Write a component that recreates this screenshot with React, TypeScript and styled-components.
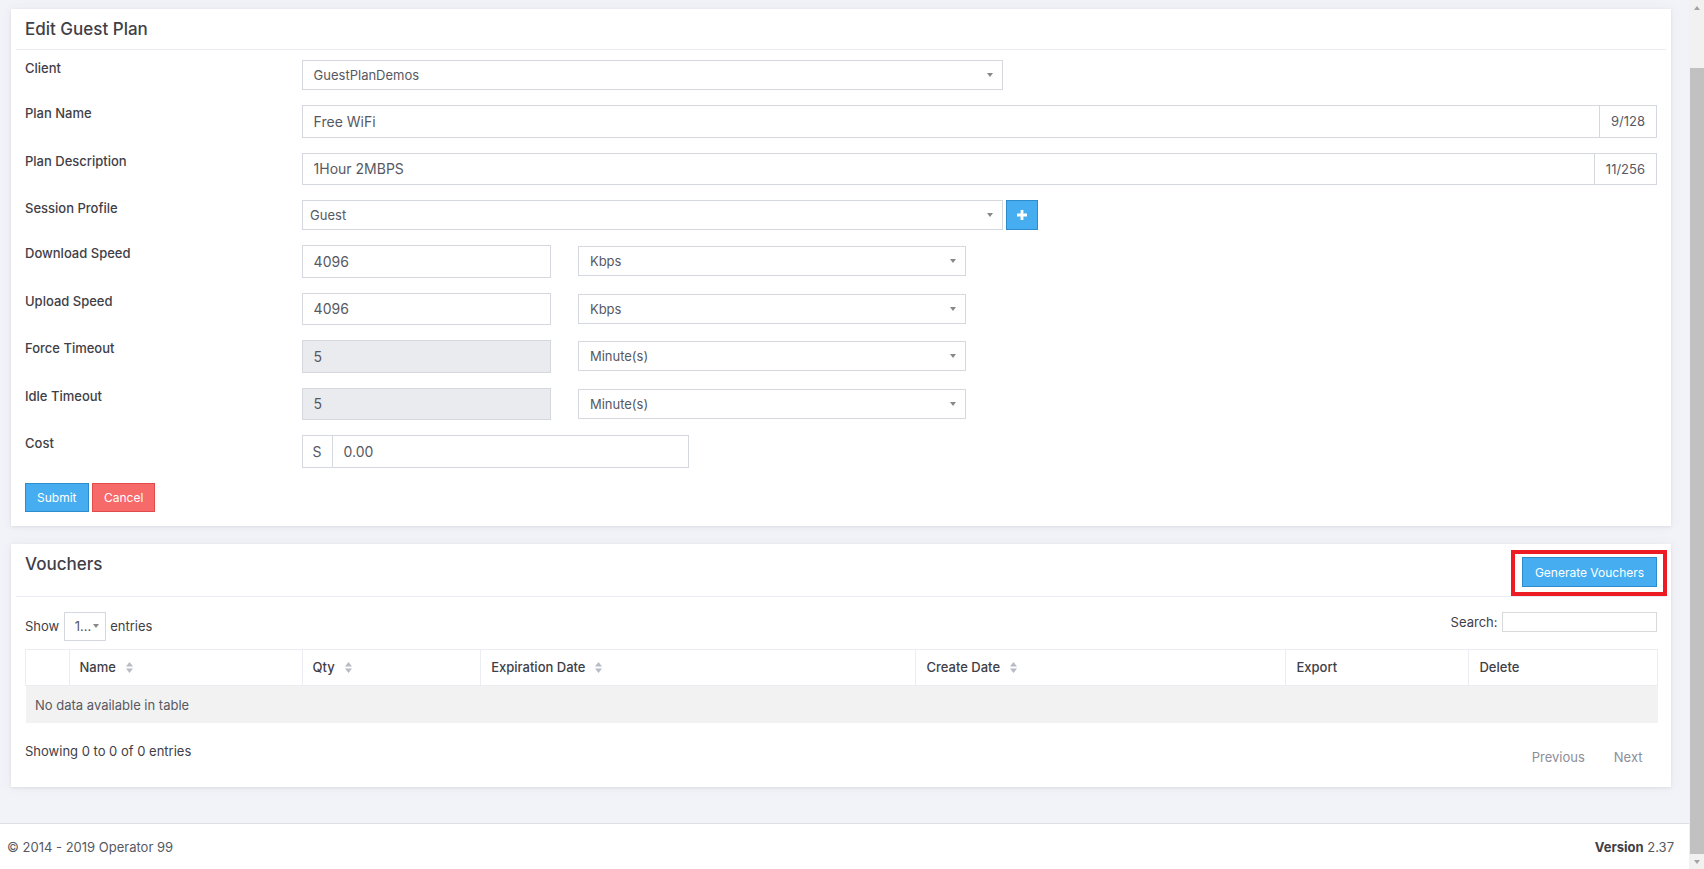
import { useLayoutEffect, useRef, useState } from 'react';
import styled, { createGlobalStyle } from 'styled-components';

const GlobalStyle = createGlobalStyle`
  html, body {
    margin: 0;
    padding: 0;
    height: 100%;
    overflow: hidden;
  }
  body {
    font-family: Inter, "Open Sans", "Liberation Sans", sans-serif;
    font-size: 13px;
    color: #575962;
    background: #f2f3f8;
  }
  * {
    box-sizing: border-box;
  }
`;

const Shell = styled.div`
  display: flex;
  height: 100vh;
`;

const Viewport = styled.div`
  flex: 1;
  min-width: 0;
  overflow-y: scroll;
  background: #f2f3f8;
  scrollbar-width: none;

  &::-webkit-scrollbar {
    display: none;
  }
`;

const Rail = styled.div`
  flex: 0 0 15px;
  display: flex;
  flex-direction: column;
  background: #f1f1f1;
`;

const RailButton = styled.div<{ $dir: 'up' | 'down' }>`
  flex: 0 0 15px;
  display: flex;
  align-items: center;
  justify-content: center;

  &::before {
    content: '';
    width: 0;
    height: 0;
    border-left: 3.5px solid transparent;
    border-right: 3.5px solid transparent;
    ${(p) => (p.$dir === 'up' ? 'border-bottom' : 'border-top')}: 4px solid #a3a3a3;
  }
`;

const RailTrack = styled.div`
  position: relative;
  flex: 1;
`;

const Thumb = styled.div`
  position: absolute;
  left: 1px;
  right: 0;
  background: #c1c1c1;
`;

const Main = styled.main`
  display: flex;
  flex-direction: column;
  gap: 18px;
  padding: 68px 18px 36px 11px;
`;

const Card = styled.section`
  background: #fff;
  box-shadow: 0 1px 3px rgba(69, 65, 78, 0.1), 0 0 12px rgba(69, 65, 78, 0.05);
`;

const CardHead = styled.div<{ $bottom?: number }>`
  display: flex;
  justify-content: space-between;
  align-items: flex-start;
  margin: 0 5px;
  padding: 8px 9px ${(p) => p.$bottom ?? 8}px;
  border-bottom: 1px solid #ebedf2;
`;

const CardTitle = styled.h3`
  margin: 0;
  font-size: 17px;
  line-height: 24px;
  font-weight: 500;
  color: #3f4047;
`;

const CardBody = styled.div`
  padding: 10px 14px 14px;
`;

const FormRow = styled.div`
  display: flex;
  align-items: flex-start;
  margin-bottom: 15px;
`;

const Label = styled.label`
  flex: 0 0 276.6px;
  font-size: 13px;
  line-height: 17px;
  font-weight: 500;
  color: #3f4047;
`;

const Controls = styled.div`
  flex: 1;
  display: flex;
  align-items: center;
  min-width: 0;
`;

const Input = styled.input<{ $width?: number }>`
  width: ${(p) => (p.$width ? `${p.$width}px` : '100%')};
  height: 32.5px;
  padding: 0 11px;
  border: 1px solid #d6d8df;
  border-radius: 0;
  font-family: inherit;
  font-size: 14px;
  color: #575962;
  background: #fff;
  outline: none;

  &:disabled {
    background: #e9ebee;
    color: #575962;
    opacity: 1;
  }
`;

const InputGroup = styled.div<{ $width?: number }>`
  display: flex;
  width: ${(p) => (p.$width ? `${p.$width}px` : '100%')};
  height: 32.5px;
  border: 1px solid #d6d8df;

  ${Input} {
    flex: 1;
    height: 100%;
    border: none;
    min-width: 0;
  }
`;

const Addon = styled.span<{ $side: 'left' | 'right' }>`
  display: flex;
  align-items: center;
  justify-content: center;
  padding: 0 ${(p) => (p.$side === 'left' ? 10 : 11)}px;
  font-size: ${(p) => (p.$side === 'left' ? 14 : 13)}px;
  color: #575962;
  ${(p) => (p.$side === 'left' ? 'border-right' : 'border-left')}: 1px solid #d6d8df;
`;

const Select = styled.div<{ $width: number; $pad?: number; $height?: number }>`
  position: relative;
  display: flex;
  align-items: center;
  width: ${(p) => p.$width}px;
  height: ${(p) => p.$height ?? 30}px;
  padding: 0 28px 0 ${(p) => p.$pad ?? 11}px;
  border: 1px solid #d6d8df;
  background: #fff;
  font-size: 13px;
  color: #575962;
  white-space: nowrap;
  overflow: hidden;
`;

const Caret = styled.span<{ $right?: number }>`
  position: absolute;
  right: ${(p) => p.$right ?? 9}px;
  top: 50%;
  margin-top: -2px;
  width: 0;
  height: 0;
  border-left: 3.5px solid transparent;
  border-right: 3.5px solid transparent;
  border-top: 4px solid #888;
`;

const IconButton = styled.button`
  display: flex;
  align-items: center;
  justify-content: center;
  width: 31.5px;
  height: 30px;
  margin-left: 3.5px;
  padding: 0;
  border: 1px solid #2f8ccc;
  background: #46aef0;
  cursor: pointer;
`;

const Gap = styled.span<{ $w: number }>`
  flex: 0 0 ${(p) => p.$w}px;
`;

const Actions = styled.div`
  display: flex;
  gap: 3.5px;
`;

const Button = styled.button<{ $variant: 'info' | 'danger' }>`
  height: 29.5px;
  padding: 0 11px;
  border: 1px solid ${(p) => (p.$variant === 'info' ? '#2f8ccc' : '#e14b4b')};
  background: ${(p) => (p.$variant === 'info' ? '#46aef0' : '#f66a6a')};
  color: #fff;
  font-family: inherit;
  font-size: 12px;
  cursor: pointer;
`;

const Highlight = styled.span`
  position: relative;
  display: inline-flex;
  margin-top: 5px;

  &::after {
    content: '';
    position: absolute;
    top: -7px;
    left: -11.5px;
    right: -10px;
    bottom: -9px;
    border: 4px solid #ed1c24;
    pointer-events: none;
  }
`;

const WideButton = styled(Button)`
  width: 135px;
  height: 30px;
`;

const TableTools = styled.div`
  display: flex;
  justify-content: space-between;
  align-items: flex-start;
  margin-top: 5px;
`;

const ToolGroup = styled.div`
  display: flex;
  align-items: center;
  gap: 4.5px;
  color: #3f4047;
`;

const SearchInput = styled.input`
  width: 155px;
  height: 19.5px;
  border: 1px solid #d9d9d9;
  outline: none;
`;

const Table = styled.table`
  width: 100%;
  margin-top: 8px;
  border-collapse: collapse;
  table-layout: fixed;
`;

const Th = styled.th`
  height: 36.7px;
  padding: 0 10px;
  border: 1px solid #ebedf2;
  text-align: left;
  font-size: 13px;
  font-weight: 500;
  color: #3f4047;
  white-space: nowrap;
`;

const SortIcon = styled.svg`
  margin-left: 10px;
  vertical-align: -1px;
`;

const EmptyCell = styled.td`
  height: 37.7px;
  padding: 0 9.5px;
  background: #f2f2f2;
  color: #575962;
`;

const InfoRow = styled.div`
  display: flex;
  justify-content: space-between;
  align-items: flex-start;
  margin-top: 18px;
`;

const Info = styled.div`
  line-height: 20px;
  color: #3f4047;
`;

const Pager = styled.div`
  display: flex;
`;

const PageLink = styled.span`
  padding: 6px 14.5px;
  line-height: 20px;
  color: #8c8e99;
`;

const Footer = styled.footer`
  display: flex;
  justify-content: space-between;
  align-items: center;
  height: 46px;
  padding: 0 15px 0 7px;
  background: #fff;
  border-top: 1px solid #dcdfe5;
  color: #575962;
`;

const Strong = styled.b`
  font-weight: 700;
  color: #3f4047;
`;

const SortGlyph = () => (
  <SortIcon width="7" height="11" viewBox="0 0 7 11">
    <path d="M0 4.5 L3.5 0 L7 4.5 Z M0 6.5 L3.5 11 L7 6.5 Z" fill="#b8bac6" />
  </SortIcon>
);

const columns: { title: string; width: number; sort: boolean }[] = [
  { title: '', width: 43.5, sort: false },
  { title: 'Name', width: 233, sort: true },
  { title: 'Qty', width: 178.7, sort: true },
  { title: 'Expiration Date', width: 435.3, sort: true },
  { title: 'Create Date', width: 370, sort: true },
  { title: 'Export', width: 183, sort: false },
  { title: 'Delete', width: 189, sort: false },
];

export default function App() {
  const viewRef = useRef<HTMLDivElement>(null);
  const trackRef = useRef<HTMLDivElement>(null);
  const [thumb, setThumb] = useState({ top: 0, height: 0 });

  useLayoutEffect(() => {
    const view = viewRef.current;
    const track = trackRef.current;
    if (!view || !track) return;
    view.scrollTop = view.scrollHeight;
    const trackHeight = track.clientHeight;
    setThumb({
      top: (view.scrollTop / view.scrollHeight) * trackHeight,
      height: (view.clientHeight / view.scrollHeight) * trackHeight,
    });
  }, []);

  return (
    <>
      <GlobalStyle />
      <Shell>
        <Viewport ref={viewRef}>
          <Main>
            <Card>
              <CardHead>
                <CardTitle>Edit Guest Plan</CardTitle>
              </CardHead>
              <CardBody>
                <FormRow>
                  <Label>Client</Label>
                  <Controls>
                    <Select $width={701}>
                      GuestPlanDemos
                      <Caret />
                    </Select>
                  </Controls>
                </FormRow>
                <FormRow>
                  <Label>Plan Name</Label>
                  <Controls>
                    <InputGroup>
                      <Input defaultValue="Free WiFi" />
                      <Addon $side="right">9/128</Addon>
                    </InputGroup>
                  </Controls>
                </FormRow>
                <FormRow>
                  <Label>Plan Description</Label>
                  <Controls>
                    <InputGroup>
                      <Input defaultValue="1Hour 2MBPS" />
                      <Addon $side="right">11/256</Addon>
                    </InputGroup>
                  </Controls>
                </FormRow>
                <FormRow>
                  <Label>Session Profile</Label>
                  <Controls>
                    <Select $width={701} $pad={7.5}>
                      Guest
                      <Caret />
                    </Select>
                    <IconButton type="button" aria-label="Add session profile">
                      <svg width="10" height="10" viewBox="0 0 10 10">
                        <path d="M3.6 0h2.8v3.6H10v2.8H6.4V10H3.6V6.4H0V3.6h3.6z" fill="#fff" />
                      </svg>
                    </IconButton>
                  </Controls>
                </FormRow>
                <FormRow>
                  <Label>Download Speed</Label>
                  <Controls>
                    <Input $width={249} defaultValue="4096" />
                    <Gap $w={27.3} />
                    <Select $width={388}>
                      Kbps
                      <Caret />
                    </Select>
                  </Controls>
                </FormRow>
                <FormRow>
                  <Label>Upload Speed</Label>
                  <Controls>
                    <Input $width={249} defaultValue="4096" />
                    <Gap $w={27.3} />
                    <Select $width={388}>
                      Kbps
                      <Caret />
                    </Select>
                  </Controls>
                </FormRow>
                <FormRow>
                  <Label>Force Timeout</Label>
                  <Controls>
                    <Input $width={249} defaultValue="5" disabled />
                    <Gap $w={27.3} />
                    <Select $width={388}>
                      Minute(s)
                      <Caret />
                    </Select>
                  </Controls>
                </FormRow>
                <FormRow>
                  <Label>Idle Timeout</Label>
                  <Controls>
                    <Input $width={249} defaultValue="5" disabled />
                    <Gap $w={27.3} />
                    <Select $width={388}>
                      Minute(s)
                      <Caret />
                    </Select>
                  </Controls>
                </FormRow>
                <FormRow>
                  <Label>Cost</Label>
                  <Controls>
                    <InputGroup $width={387}>
                      <Addon $side="left">S</Addon>
                      <Input defaultValue="0.00" />
                    </InputGroup>
                  </Controls>
                </FormRow>
                <Actions>
                  <Button $variant="info">Submit</Button>
                  <Button $variant="danger">Cancel</Button>
                </Actions>
              </CardBody>
            </Card>

            <Card>
              <CardHead $bottom={9}>
                <CardTitle>Vouchers</CardTitle>
                <Highlight>
                  <WideButton $variant="info">Generate Vouchers</WideButton>
                </Highlight>
              </CardHead>
              <CardBody>
                <TableTools>
                  <ToolGroup>
                    Show
                    <Select $width={42} $pad={10} $height={28.6}>
                      1…
                      <Caret $right={6} />
                    </Select>
                    entries
                  </ToolGroup>
                  <ToolGroup>
                    Search:
                    <SearchInput type="search" />
                  </ToolGroup>
                </TableTools>
                <Table>
                  <colgroup>
                    {columns.map((c, i) => (
                      <col key={i} style={{ width: c.width }} />
                    ))}
                  </colgroup>
                  <thead>
                    <tr>
                      {columns.map((c, i) => (
                        <Th key={i}>
                          {c.title}
                          {c.sort && <SortGlyph />}
                        </Th>
                      ))}
                    </tr>
                  </thead>
                  <tbody>
                    <tr>
                      <EmptyCell colSpan={columns.length}>No data available in table</EmptyCell>
                    </tr>
                  </tbody>
                </Table>
                <InfoRow>
                  <Info>Showing 0 to 0 of 0 entries</Info>
                  <Pager>
                    <PageLink>Previous</PageLink>
                    <PageLink>Next</PageLink>
                  </Pager>
                </InfoRow>
              </CardBody>
            </Card>
          </Main>
          <Footer>
            <span>© 2014 - 2019 Operator 99</span>
            <span>
              <Strong>Version</Strong> 2.37
            </span>
          </Footer>
        </Viewport>
        <Rail>
          <RailButton $dir="up" />
          <RailTrack ref={trackRef}>
            <Thumb style={{ top: thumb.top, height: thumb.height }} />
          </RailTrack>
          <RailButton $dir="down" />
        </Rail>
      </Shell>
    </>
  );
}
